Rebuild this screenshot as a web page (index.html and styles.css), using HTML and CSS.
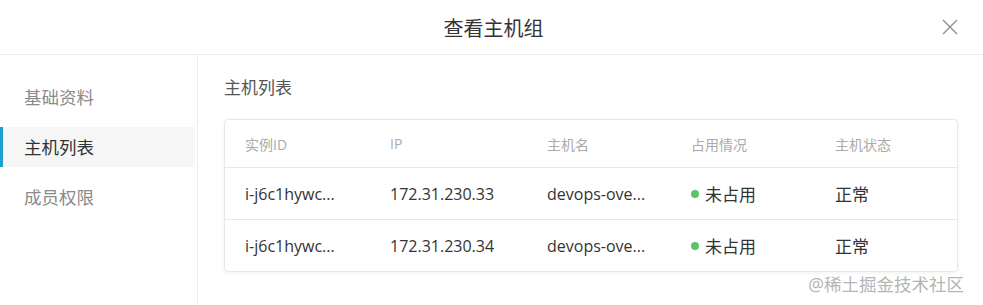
FILE: index.html
```html
<!DOCTYPE html>
<html lang="zh-CN">
<head>
    <meta charset="UTF-8">
    <title>查看主机组</title>
    <link rel="stylesheet" href="styles.css">
</head>
<body>
    <div class="modal">
        <div class="modal-header">
            <span class="modal-title">查看主机组</span>
            <span class="close">
                <svg viewBox="0 0 16 16" width="16" height="16">
                    <path d="M1 1 L15 15 M15 1 L1 15" stroke="#8c8c8c" stroke-width="1.3" fill="none"/>
                </svg>
            </span>
        </div>
        <div class="modal-body">
            <!-- side menu -->
            <div class="side">
                <div class="side-item">基础资料</div>
                <div class="side-item active">主机列表</div>
                <div class="side-item">成员权限</div>
            </div>

            <!-- content -->
            <div class="content">
                <div class="section-title">主机列表</div>
                <div class="table-card">
                    <div class="row head">
                        <div class="cell c1">实例ID</div>
                        <div class="cell c2">IP</div>
                        <div class="cell c3">主机名</div>
                        <div class="cell c4">占用情况</div>
                        <div class="cell c5">主机状态</div>
                    </div>
                    <div class="row">
                        <div class="cell c1">i-j6c1hywc...</div>
                        <div class="cell c2">172.31.230.33</div>
                        <div class="cell c3">devops-ove...</div>
                        <div class="cell c4 cjk"><span class="dot"></span>未占用</div>
                        <div class="cell c5 cjk">正常</div>
                    </div>
                    <div class="row">
                        <div class="cell c1">i-j6c1hywc...</div>
                        <div class="cell c2">172.31.230.34</div>
                        <div class="cell c3">devops-ove...</div>
                        <div class="cell c4 cjk"><span class="dot"></span>未占用</div>
                        <div class="cell c5 cjk">正常</div>
                    </div>
                </div>
                <div class="watermark">@稀土掘金技术社区</div>
            </div>
        </div>
    </div>
</body>
</html>
```

FILE: styles.css
```css
body {
    margin: 0;
    background: #fff;
    font-family: "Open Sans", "Noto Sans CJK SC", sans-serif;
    color: #333;
}
.modal {
    width: 983px;
    height: 305px;
    overflow: hidden;
}
.modal-header {
    height: 54px;
    border-bottom: 1px solid #ececec;
    display: flex;
    align-items: center;
    justify-content: center;
    position: relative;
}
.modal-title {
    font-size: 20px;
    color: #333;
    margin-left: 4px;
}
.close {
    position: absolute;
    right: 25px;
    top: 19px;
    width: 16px;
    height: 16px;
}
.close svg {
    display: block;
}
.modal-body {
    display: flex;
    height: 250px;
}
.side {
    width: 198px;
    border-right: 1px solid #ececec;
    padding-top: 22px;
    box-sizing: border-box;
}
.side-item {
    height: 40px;
    line-height: 40px;
    padding-left: 24px;
    font-size: 17.5px;
    color: #8a8a8a;
    margin-bottom: 10px;
    margin-right: 2px;
    position: relative;
}
.side-item.active {
    background: #f6f6f6;
    color: #333;
}
.side-item.active::before {
    content: "";
    position: absolute;
    left: 0;
    top: 0;
    bottom: 0;
    width: 3px;
    background: #1f9fd0;
}
.content {
    flex: 1;
    padding: 21px 23px 0 26px;
    position: relative;
}
.section-title {
    font-size: 17px;
    color: #555;
    line-height: 24px;
    margin-bottom: 19px;
}
.table-card {
    border: 1px solid #e8e8e8;
    border-radius: 4px;
    box-shadow: 0 1px 4px rgba(0, 0, 0, 0.06);
    width: 734px;
    box-sizing: border-box;
}
.row {
    display: flex;
    align-items: center;
    height: 51px;
    border-top: 1px solid #e8e8e8;
    font-size: 16px;
    color: #333;
}
.row.head {
    height: 47px;
    border-top: none;
    font-size: 14px;
    color: #aaa;
}
.cell {
    padding-left: 20px;
    box-sizing: border-box;
    white-space: nowrap;
}
.row .cjk {
    font-size: 17px;
}
.c1 { width: 145px; }
.c2 { width: 157px; }
.c3 { width: 144px; }
.c4 { width: 144px; display: flex; align-items: center; }
.c5 { width: 142px; }
.dot {
    display: inline-block;
    width: 8px;
    height: 8px;
    border-radius: 50%;
    background: #5cc46c;
    margin-right: 6px;
}
.watermark {
    position: absolute;
    right: 19px;
    bottom: 9px;
    font-size: 17.5px;
    color: #b5b5b5;
}
```
